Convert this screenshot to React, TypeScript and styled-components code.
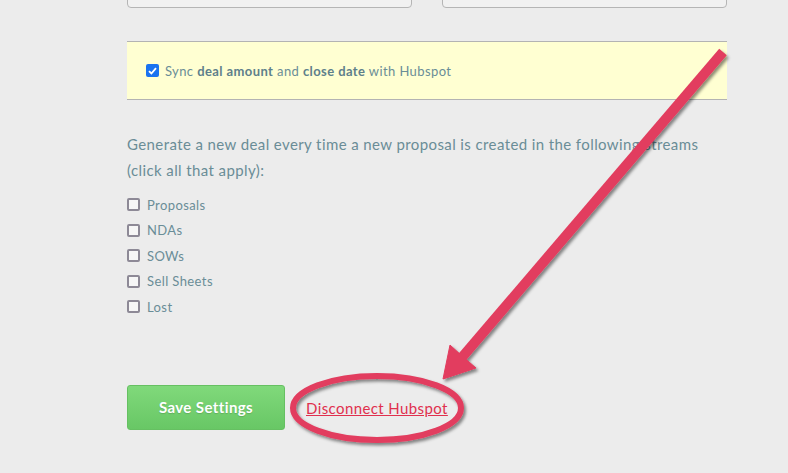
import React, { useState } from "react";
import styled, { createGlobalStyle } from "styled-components";

const streams = ["Proposals", "NDAs", "SOWs", "Sell Sheets", "Lost"];

const Check = ({ checked, onClick }: { checked: boolean; onClick?: () => void }) => (
  <SBox $checked={checked} onClick={onClick}>
    {checked && (
      <svg width="9" height="8" viewBox="0 0 9 8">
        <path d="M1 4.2 L3.4 6.5 L8 1.2" fill="none" stroke="#fff" strokeWidth="1.8" />
      </svg>
    )}
  </SBox>
);

const App = () => {
  const [sync, setSync] = useState(true);
  const [picked, setPicked] = useState<string[]>([]);

  const toggle = (name: string) => {
    setPicked((prev) => (prev.includes(name) ? prev.filter((p) => p !== name) : [...prev, name]));
  };

  return (
    <SPage>
      <GlobalStyle />
      <SForm>
        <SInputs>
          <SInput />
          <SInput />
        </SInputs>

        <SSyncBar>
          <Check checked={sync} onClick={() => setSync(!sync)} />
          <SSyncText>
            Sync <b>deal amount</b> and <b>close date</b> with Hubspot
          </SSyncText>
        </SSyncBar>

        <SIntro>
          Generate a new deal every time a new proposal is created in the following streams
          <br />
          (click all that apply):
        </SIntro>

        <SList>
          {streams.map((s) => (
            <SItem key={s}>
              <Check checked={picked.includes(s)} onClick={() => toggle(s)} />
              <span>{s}</span>
            </SItem>
          ))}
        </SList>

        <SActions>
          <SSaveButton>Save Settings</SSaveButton>
          <SDisconnect href="#">Disconnect Hubspot</SDisconnect>
        </SActions>
      </SForm>

      {/* annotation drawn over the page */}
      <SOverlay width="788" height="473" viewBox="0 0 788 473">
        <defs>
          <filter id="shadow" x="-20%" y="-20%" width="140%" height="140%">
            <feDropShadow dx="2" dy="2.5" stdDeviation="1.6" floodColor="#000" floodOpacity="0.45" />
          </filter>
        </defs>
        <g filter="url(#shadow)" fill="#e23c5e" stroke="#e23c5e">
          <line x1="723" y1="52" x2="458" y2="362" strokeWidth="10" />
          <polygon points="443,379 450,345 461,355 476,368" strokeWidth="1" strokeLinejoin="miter" />
          <ellipse cx="377" cy="408" rx="84" ry="32" fill="none" strokeWidth="6" />
        </g>
      </SOverlay>
    </SPage>
  );
};

export default App;

const GlobalStyle = createGlobalStyle`
  body {
    margin: 0;
    background: #ececec;
    font-family: Lato, "Open Sans", sans-serif;
  }
`;

const SPage = styled.div`
  position: relative;
  width: 788px;
  height: 473px;
  overflow: hidden;
  background: #ececec;
`;

const SForm = styled.div`
  width: 600px;
  padding-left: 127px;
  color: #6a8d97;
  letter-spacing: 0.4px;
`;

const SInputs = styled.div`
  display: grid;
  grid-template-columns: 285px 285px;
  gap: 30px;
  margin-top: -28px;
`;

const SInput = styled.div`
  height: 34px;
  background: #f1f1f1;
  border: 1px solid #b5b5b5;
  border-radius: 4px;
`;

const SSyncBar = styled.div`
  margin-top: 33px;
  height: 57px;
  display: flex;
  align-items: center;
  gap: 6px;
  padding-left: 19px;
  background: #ffffd2;
  border-top: 1px solid #b3b3b3;
  border-bottom: 1px solid #b3b3b3;
  font-size: 13px;
`;

const SSyncText = styled.span`
  b {
    font-weight: 700;
    color: #5e808b;
  }
`;

const SBox = styled.span<{ $checked: boolean }>`
  box-sizing: border-box;
  width: 13px;
  height: 13px;
  flex: none;
  display: inline-flex;
  align-items: center;
  justify-content: center;
  border-radius: 2px;
  cursor: pointer;
  background: ${(p) => (p.$checked ? "#1a73f0" : "#f6f6f6")};
  border: ${(p) => (p.$checked ? "none" : "2px solid #8d8996")};
`;

const SIntro = styled.p`
  margin: 31px 0 0;
  font-size: 15px;
  line-height: 26px;
`;

const SList = styled.div`
  margin-top: 9px;
  display: flex;
  flex-direction: column;
`;

const SItem = styled.label`
  height: 25.5px;
  display: flex;
  align-items: center;
  gap: 7px;
  font-size: 13px;
`;

const SActions = styled.div`
  margin-top: 65px;
  display: flex;
  align-items: center;
  gap: 21px;
`;

const SSaveButton = styled.button`
  width: 158px;
  height: 45px;
  border: 1px solid #66c062;
  border-radius: 3px;
  background: linear-gradient(#80d97b, #68c765);
  color: #fff;
  font-family: Lato, "Open Sans", sans-serif;
  font-size: 15px;
  font-weight: 700;
  letter-spacing: 0.4px;
  text-shadow: 0 1px 1px rgba(0, 0, 0, 0.15);
  cursor: pointer;
`;

const SDisconnect = styled.a`
  color: #e0304e;
  font-size: 15px;
  text-decoration: underline;
  margin-top: 2px;
`;

const SOverlay = styled.svg`
  position: absolute;
  top: 0;
  left: 0;
  pointer-events: none;
`;
